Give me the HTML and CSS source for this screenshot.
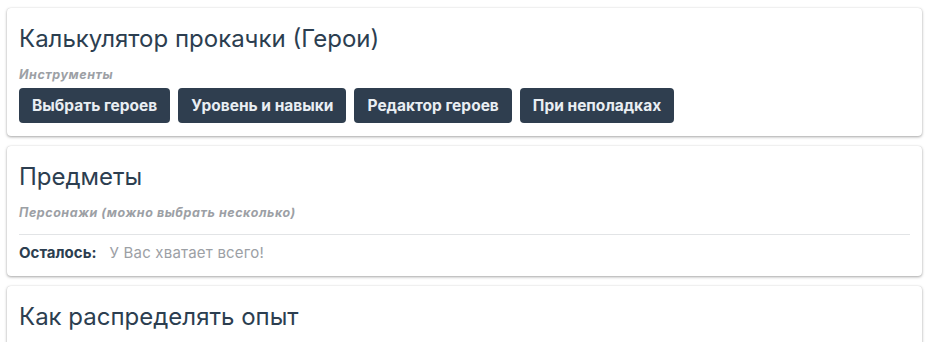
FILE: index.html
```html
<!DOCTYPE html>
<html lang="ru">
<head>
<meta charset="utf-8">
<link rel="stylesheet" href="styles.css">
</head>
<body>
<div class="page">
  <section class="card">
    <h2 class="title">Калькулятор прокачки (Герои)</h2>
    <div class="label">Инструменты</div>
    <div class="buttons">
      <button class="btn">Выбрать героев</button>
      <button class="btn">Уровень и навыки</button>
      <button class="btn">Редактор героев</button>
      <button class="btn">При неполадках</button>
    </div>
  </section>
  <section class="card">
    <h2 class="title">Предметы</h2>
    <div class="label">Персонажи (можно выбрать несколько)</div>
    <hr class="sep">
    <div class="remain"><b>Осталось:</b><span class="muted">У Вас хватает всего!</span></div>
  </section>
  <section class="card">
    <h2 class="title">Как распределять опыт</h2>
    <div class="spacer"></div>
  </section>
</div>
</body>
</html>
```
FILE: styles.css
```css
html, body { margin: 0; background: #fff; }
body {
  font-family: Inter, "Noto Sans", sans-serif;
  color: #2c3e50;
  overflow: hidden;
}
.page {
  padding: 8px 10px 0 7px;
  display: flex;
  flex-direction: column;
  gap: 10px;
}
.card {
  background: #fff;
  border-radius: 4px;
  box-shadow: 0 1px 3px rgba(0,0,0,0.35), 0 0 1px rgba(0,0,0,0.15);
  padding: 16px 12px 13px 12px;
}
.title {
  margin: 0;
  font-size: 24px;
  font-weight: 400;
  line-height: 29px;
  color: #2c3e50;
}
.label {
  margin-top: 14px;
  font-size: 12.5px;
  letter-spacing: 0.55px;
  font-style: italic;
  font-weight: 700;
  color: #9ca0a5;
  line-height: 15px;
}
.buttons {
  display: flex;
  gap: 8px;
  margin-top: 6px;
}
.btn {
  font-family: inherit;
  font-size: 15.5px;
  font-weight: 700;
  color: #e9eef3;
  background: #2f3e4f;
  border: none;
  border-radius: 4px;
  height: 35px;
  padding: 0 13px;
}
.sep {
  border: none;
  border-top: 1px solid #e2e4e6;
  margin: 14px 0 0 0;
}
.remain {
  margin-top: 8px;
  font-size: 15px;
  line-height: 20px;
}
.remain b { color: #2c3e50; }
.muted { color: #9ca0a5; margin-left: 13px; letter-spacing: 0.2px; }
.spacer { height: 40px; }
```
